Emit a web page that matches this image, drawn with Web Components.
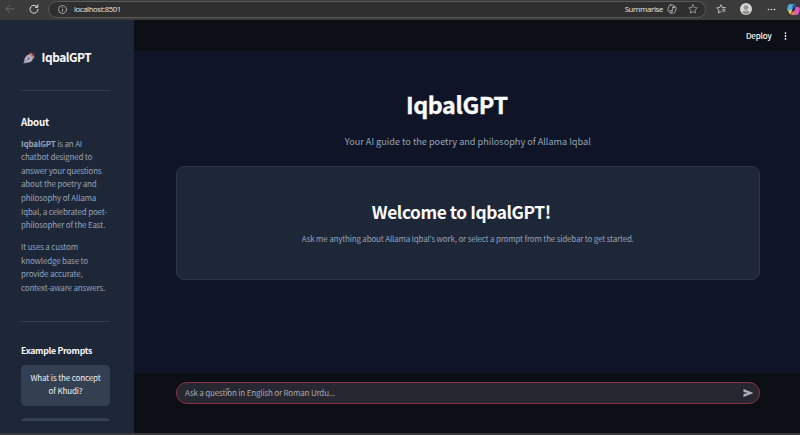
<!DOCTYPE html>
<html lang="en"><head><meta charset="utf-8"><title>IqbalGPT</title>
<style>
html,body{margin:0;height:100%;overflow:hidden;background:#0f1526}
body{font-family:"Noto Sans CJK SC","Noto Sans",sans-serif;color:#fafafa}
</style></head><body>
<app-window></app-window>
<script>
const define=(name,html)=>customElements.define(name,class extends HTMLElement{
  constructor(){super();this.attachShadow({mode:'open'}).innerHTML=html;}
});

define('browser-bar',`<style>
:host{display:flex;align-items:center;box-sizing:border-box;height:20px;background:#3b3b3b;padding:0 0 2px 5px;font:8px/16px "Open Sans","Noto Sans",sans-serif;color:#e6e6e6}
svg{display:block;flex:none;fill:none;stroke:#c0c0c0;stroke-width:.8;stroke-linecap:round;stroke-linejoin:round}
.nav{display:flex;gap:13.500px;width:43px;align-items:center}
.addr{box-sizing:border-box;width:658px;height:17px;border:1px solid #5c5c5c;border-radius:9px;background:#2f2f2f;display:flex;align-items:center;padding:0 7px 0 9px}
.url{margin-left:7px;flex:1;font-size:7.700px;letter-spacing:-.35px}
.sum{font-size:7.900px;margin-right:4px;letter-spacing:-.36px}
.star{margin-left:11px}
.tools{display:flex;align-items:center;margin-left:10px}
</style>
<div class="nav"><svg width="10" height="10" style="stroke:#737373"><path d="M9 5H1M4.500 1.500 1 5l3.500 3.500"/></svg>
<svg width="10" height="10" style="stroke:#e0e0e0;stroke-width:1"><path d="M8.300 3A4 4 0 1 0 9 5.300M8.800 .8V3.300H6.300"/></svg></div>
<div class="addr"><svg width="9" height="9"><circle cx="4.500" cy="4.500" r="4"/><path d="M4.500 4.200v2.300M4.500 2.500v.1"/></svg>
<span class="url">localhost:8501</span><span class="sum">Summarise</span>
<svg width="10" height="10"><path d="M3.500 1h2.200c1 0 1.200.6.900 1.500L5 7.500C4.700 8.500 4.300 9 3.500 9c-1 0-.9-1-1.100-1.600C1 7.500.5 6.600.9 5.300l.8-2.500C2 1.600 2.500 1 3.500 1ZM6.700 2.500C8.600 2.300 9.500 3 9.100 4.600l-.8 2.600C8 8.400 7.500 9 6.500 9h-3M5.500 3.500h2M3 6.500h2"/></svg>
<svg class="star" style="stroke:#a4a4a4" width="10" height="10"><path d="m5 .8 1.300 2.700 3 .4-2.200 2.100.5 3L5 7.600 2.400 9l.5-3L.7 3.900l3-.4Z"/></svg></div>
<div class="tools"><svg width="11" height="10" style="stroke:#dedede"><path d="M5 7.600 2.400 9l.5-3L.7 3.900l3-.4L5 .8l1.200 2.700h3M6.500 5.300H9M6.500 7.100H9"/></svg>
<svg width="12" height="12" style="stroke:none;margin-left:13px"><circle cx="6" cy="6" r="6" fill="#d6d4d1"/><circle cx="6" cy="4.500" r="2.300" fill="#96918d"/><path d="M2.300 9.800c0-3 7.400-3 7.400 0Q6 12.500 2.300 9.800Z" fill="#96918d"/></svg>
<svg width="9" height="3" style="stroke:none;fill:#e8e8e8;margin-left:15px"><circle cx="1.500" cy="1.500" r=".8"/><circle cx="4.500" cy="1.500" r=".8"/><circle cx="7.500" cy="1.500" r=".8"/></svg>
<svg width="13" height="13" style="stroke:none;margin-left:11px"><path d="M3.500 1h4L5.200 8H1.600C-.2 8 0 6 .5 4.500 1 2.500 1.700 1 3.500 1Z" fill="#54a9df"/><path d="M7 1c2 0 1.800 2 2.500 3.400L7 5 5 3Z" fill="#3553a5"/><path d="M1 7.500 5 6.700l-1 4.500C2 11.500 2.200 9 1 7.500Z" fill="#e3cd58"/><path d="M9 4h2c2 0 2 2 1.500 3.500C12 10 11.300 12 9.500 12h-4Z" fill="#d65ac1"/><path d="m4 11.500 2-4L8.500 9 7 12H5Z" fill="#e97763"/><path d="m6 4 2 .4L6.500 9 5 8.300Z" fill="#282b42"/></svg></div>`);

define('side-rule',`<style>:host{display:block;height:1px;background:#343e50}</style>`);

define('pen-icon',`<style>:host{display:block;width:14px;height:13px}svg{display:block}</style>
<svg width="14" height="13" viewBox="0 0 14 13"><path d="M.5 12.500 1.900 6.700Q3.500 4 6.500 3l3.800 4Q9.500 10.300 6.500 11.300Z" fill="#b9adc5"/><path d="m1 12 4.700-4.500" stroke="#5e556f" stroke-width=".6"/><circle cx="5.700" cy="7.500" r=".9" fill="#62586f"/><path d="m6.500 2.700 1.200-1 4 4.300-1.200 1.400Z" fill="#df8c69"/><path d="M7.200 1.300 8.500.3q1 1.500 3.300 1.800l.2 2.800-.8.900Z" fill="#493653"/></svg>`);

define('prompt-button',`<style>:host{display:block;box-sizing:border-box;height:41px;background:#334052;border-radius:4.500px;padding:6px 4px 0;text-align:center;color:#eef1f5;font-size:8px;letter-spacing:-.13px;line-height:13.600px}</style><slot></slot>`);

define('side-bar',`<style>
:host{display:block;flex:none;box-sizing:border-box;width:133.500px;background:#1e2738;padding:30px 23.500px 0 21px;overflow:hidden}
.brand{display:flex;align-items:center;gap:4.500px;height:14px;margin-left:2px}
h1,h2,h3,p{margin:0;white-space:nowrap}
h1{font-size:11.900px;line-height:14px;font-weight:700;letter-spacing:-.47px;position:relative;top:-.5px}
side-rule{margin-top:26px}
h2{font-size:9.800px;line-height:14px;margin-top:24px;letter-spacing:-.25px}
p{font-size:8px;line-height:13.640px;color:#94a3b8;letter-spacing:-.17px}
.about{margin-top:7.500px}
.more{margin-top:8px}
.more+side-rule{margin-top:26px}
h3{font-size:8.700px;line-height:14px;margin-top:22px;letter-spacing:-.27px}
prompt-button{margin-top:7px}
.peek{height:2.500px;margin-top:12.500px;overflow:hidden}
.peek prompt-button{margin:0}
</style>
<div class="brand"><pen-icon></pen-icon><h1>IqbalGPT</h1></div>
<side-rule></side-rule>
<h2>About</h2>
<p class="about"><b>IqbalGPT</b> is an AI<br>chatbot designed to<br>answer your questions<br>about the poetry and<br>philosophy of Allama<br>Iqbal, a celebrated poet-<br>philosopher of the East.</p>
<p class="more">It uses a custom<br>knowledge base to<br>provide accurate,<br>context-aware answers.</p>
<side-rule></side-rule>
<h3>Example Prompts</h3>
<prompt-button>What is the concept<br>of Khudi?</prompt-button>
<div class="peek"><prompt-button></prompt-button></div>`);

define('top-bar',`<style>:host{display:flex;justify-content:flex-end;align-items:center;height:31px;background:#0c0f16;padding-right:13px;font-size:8px;letter-spacing:-.1px;gap:12.500px;color:#fafafa}svg{display:block}span{-webkit-text-stroke:.15px}</style>
<span>Deploy</span><svg width="3" height="8" fill="#fafafa"><circle cx="1.500" cy="1.100" r=".9"/><circle cx="1.500" cy="4" r=".9"/><circle cx="1.500" cy="6.900" r=".9"/></svg>`);

define('welcome-card',`<style>:host{display:block;box-sizing:border-box;height:114px;border:1px solid #2b3748;border-radius:8px;background:#1e2738;text-align:center;padding-top:33px}
h2{margin:0 0 0 -13px;font-size:17.300px;line-height:24px;letter-spacing:-.42px}p{margin:5px 0 0;font-size:8px;letter-spacing:-.18px;line-height:19px;color:#94a3b8}</style>
<h2>Welcome to IqbalGPT!</h2><p>Ask me anything about Allama Iqbal's work, or select a prompt from the sidebar to get started.</p>`);

define('chat-input',`<style>:host{display:flex;align-items:center;justify-content:space-between;box-sizing:border-box;height:22px;border:1px solid #8f3341;border-radius:11px;background:#262730;padding:0 5px 1px 8px;font-size:8px;letter-spacing:-.17px;line-height:19px;color:#a9a9af}
.caret{position:relative}.caret svg{position:absolute;left:41px;top:5px}svg{display:block}</style>
<span class="caret">Ask a question in English or Roman Urdu...<svg width="4" height="7" fill="none" stroke="#b3b3b7" stroke-width=".5"><path d="M.5 .5H3.500M2 .5v6"/></svg></span>
<svg width="11" height="10" fill="#b0b0be"><path d="M.5 1 10.500 5 .5 9V6L5.300 5 .5 4Z"/></svg>`);

define('chat-page',`<style>
:host{display:flex;flex-direction:column;flex:1;background:#0f1526}
main{flex:1;padding:38px 40.500px 0 42.500px;text-align:center}
h1{margin:0 0 0 -22px;font-size:23.300px;line-height:30px;letter-spacing:-.4px;-webkit-text-stroke:.35px}
p{margin:12px 0 15px;font-size:9.200px;letter-spacing:-.03px;line-height:20px;color:#94a3b8}
footer{box-sizing:border-box;height:60px;background:#0c0f16;padding:9px 40.500px 0 42.500px}
</style><top-bar></top-bar>
<main><h1>IqbalGPT</h1><p>Your AI guide to the poetry and philosophy of Allama Iqbal</p><welcome-card></welcome-card></main>
<footer><chat-input></chat-input></footer>`);

define('app-window',`<style>:host{display:flex;flex-direction:column;height:435px;background:#393939}.body{display:flex;height:413px}</style>
<browser-bar></browser-bar><div class="body"><side-bar></side-bar><chat-page></chat-page></div>`);
</script></body></html>
